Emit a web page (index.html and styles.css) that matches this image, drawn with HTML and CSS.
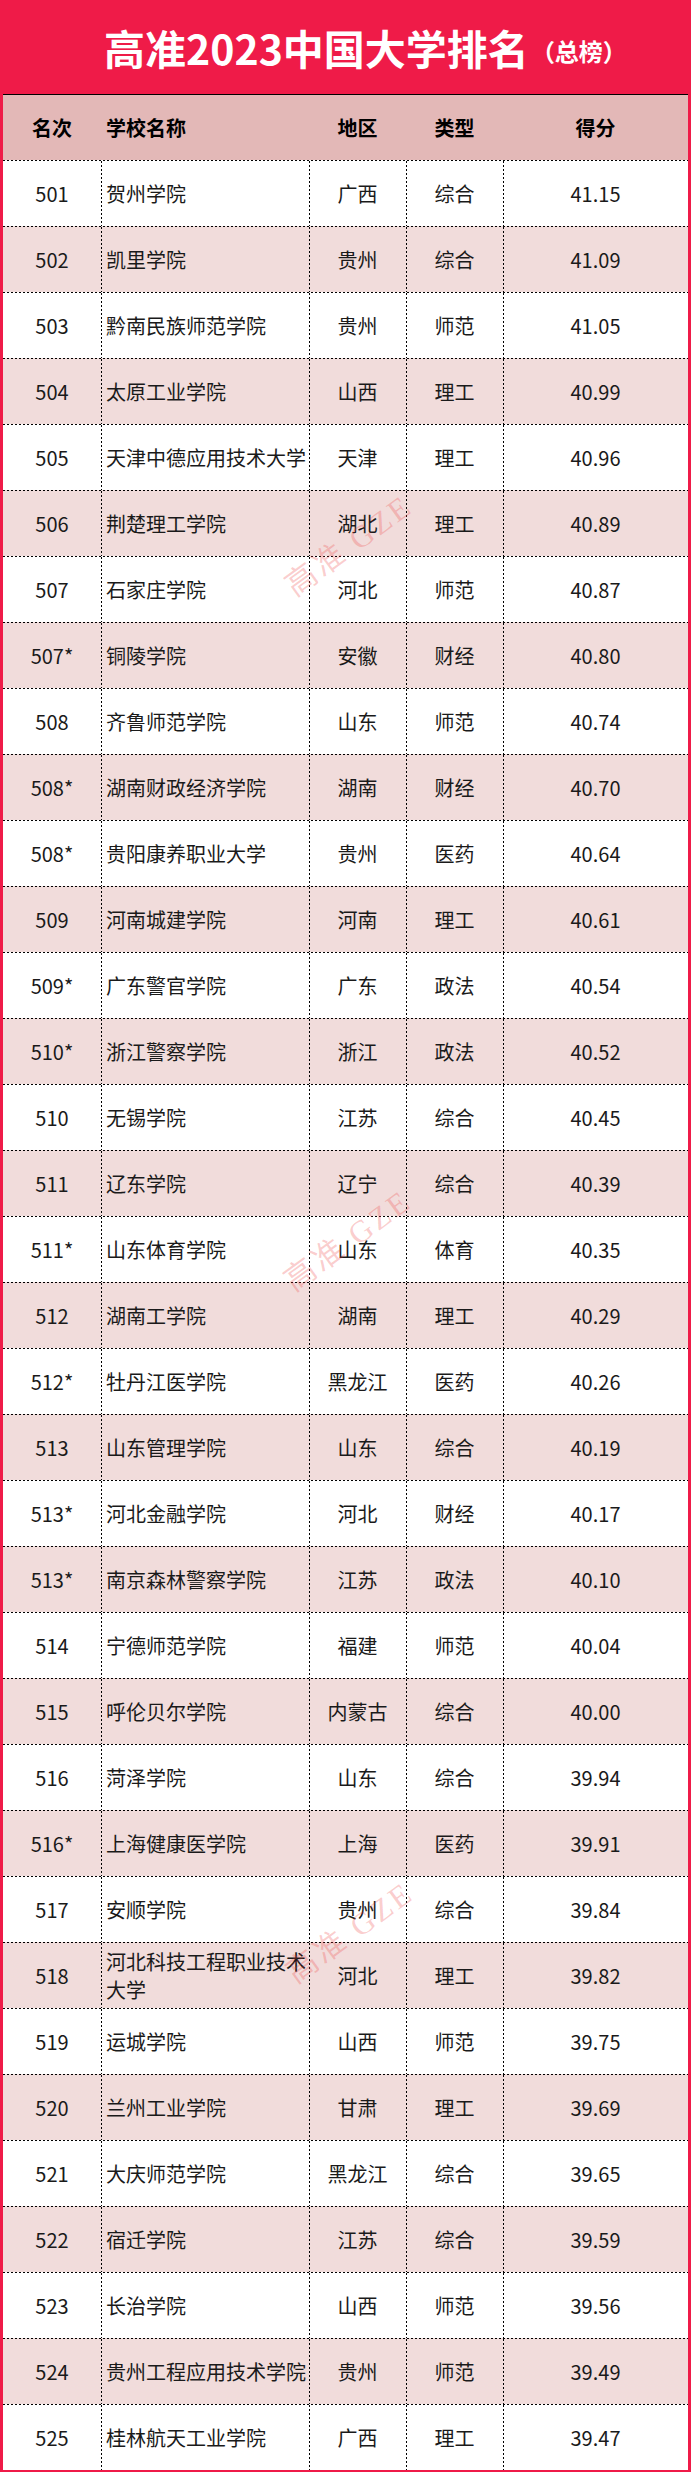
FILE: index.html
```html
<!DOCTYPE html>
<html lang="zh-CN">
<head>
<meta charset="utf-8">
<title>高准2023中国大学排名（总榜）</title>
<link rel="stylesheet" href="styles.css">
</head>
<body>
<div class="sheet">
  <div class="title"><span class="title-main">高准2023中国大学排名</span><span class="title-sub">（总榜）</span></div>
  <div class="head">
    <div class="cell c-rank">名次</div>
    <div class="cell c-name">学校名称</div>
    <div class="cell c-mid">地区</div>
    <div class="cell c-mid">类型</div>
    <div class="cell c-mid">得分</div>
  </div>
  <div class="row"><div class="cell c-rank">501</div><div class="cell c-name">贺州学院</div><div class="cell c-mid">广西</div><div class="cell c-mid">综合</div><div class="cell c-mid">41.15</div></div>
  <div class="row alt"><div class="cell c-rank">502</div><div class="cell c-name">凯里学院</div><div class="cell c-mid">贵州</div><div class="cell c-mid">综合</div><div class="cell c-mid">41.09</div></div>
  <div class="row"><div class="cell c-rank">503</div><div class="cell c-name">黔南民族师范学院</div><div class="cell c-mid">贵州</div><div class="cell c-mid">师范</div><div class="cell c-mid">41.05</div></div>
  <div class="row alt"><div class="cell c-rank">504</div><div class="cell c-name">太原工业学院</div><div class="cell c-mid">山西</div><div class="cell c-mid">理工</div><div class="cell c-mid">40.99</div></div>
  <div class="row"><div class="cell c-rank">505</div><div class="cell c-name">天津中德应用技术大学</div><div class="cell c-mid">天津</div><div class="cell c-mid">理工</div><div class="cell c-mid">40.96</div></div>
  <div class="row alt"><div class="cell c-rank">506</div><div class="cell c-name">荆楚理工学院</div><div class="cell c-mid">湖北</div><div class="cell c-mid">理工</div><div class="cell c-mid">40.89</div></div>
  <div class="row"><div class="cell c-rank">507</div><div class="cell c-name">石家庄学院</div><div class="cell c-mid">河北</div><div class="cell c-mid">师范</div><div class="cell c-mid">40.87</div></div>
  <div class="row alt"><div class="cell c-rank">507*</div><div class="cell c-name">铜陵学院</div><div class="cell c-mid">安徽</div><div class="cell c-mid">财经</div><div class="cell c-mid">40.80</div></div>
  <div class="row"><div class="cell c-rank">508</div><div class="cell c-name">齐鲁师范学院</div><div class="cell c-mid">山东</div><div class="cell c-mid">师范</div><div class="cell c-mid">40.74</div></div>
  <div class="row alt"><div class="cell c-rank">508*</div><div class="cell c-name">湖南财政经济学院</div><div class="cell c-mid">湖南</div><div class="cell c-mid">财经</div><div class="cell c-mid">40.70</div></div>
  <div class="row"><div class="cell c-rank">508*</div><div class="cell c-name">贵阳康养职业大学</div><div class="cell c-mid">贵州</div><div class="cell c-mid">医药</div><div class="cell c-mid">40.64</div></div>
  <div class="row alt"><div class="cell c-rank">509</div><div class="cell c-name">河南城建学院</div><div class="cell c-mid">河南</div><div class="cell c-mid">理工</div><div class="cell c-mid">40.61</div></div>
  <div class="row"><div class="cell c-rank">509*</div><div class="cell c-name">广东警官学院</div><div class="cell c-mid">广东</div><div class="cell c-mid">政法</div><div class="cell c-mid">40.54</div></div>
  <div class="row alt"><div class="cell c-rank">510*</div><div class="cell c-name">浙江警察学院</div><div class="cell c-mid">浙江</div><div class="cell c-mid">政法</div><div class="cell c-mid">40.52</div></div>
  <div class="row"><div class="cell c-rank">510</div><div class="cell c-name">无锡学院</div><div class="cell c-mid">江苏</div><div class="cell c-mid">综合</div><div class="cell c-mid">40.45</div></div>
  <div class="row alt"><div class="cell c-rank">511</div><div class="cell c-name">辽东学院</div><div class="cell c-mid">辽宁</div><div class="cell c-mid">综合</div><div class="cell c-mid">40.39</div></div>
  <div class="row"><div class="cell c-rank">511*</div><div class="cell c-name">山东体育学院</div><div class="cell c-mid">山东</div><div class="cell c-mid">体育</div><div class="cell c-mid">40.35</div></div>
  <div class="row alt"><div class="cell c-rank">512</div><div class="cell c-name">湖南工学院</div><div class="cell c-mid">湖南</div><div class="cell c-mid">理工</div><div class="cell c-mid">40.29</div></div>
  <div class="row"><div class="cell c-rank">512*</div><div class="cell c-name">牡丹江医学院</div><div class="cell c-mid">黑龙江</div><div class="cell c-mid">医药</div><div class="cell c-mid">40.26</div></div>
  <div class="row alt"><div class="cell c-rank">513</div><div class="cell c-name">山东管理学院</div><div class="cell c-mid">山东</div><div class="cell c-mid">综合</div><div class="cell c-mid">40.19</div></div>
  <div class="row"><div class="cell c-rank">513*</div><div class="cell c-name">河北金融学院</div><div class="cell c-mid">河北</div><div class="cell c-mid">财经</div><div class="cell c-mid">40.17</div></div>
  <div class="row alt"><div class="cell c-rank">513*</div><div class="cell c-name">南京森林警察学院</div><div class="cell c-mid">江苏</div><div class="cell c-mid">政法</div><div class="cell c-mid">40.10</div></div>
  <div class="row"><div class="cell c-rank">514</div><div class="cell c-name">宁德师范学院</div><div class="cell c-mid">福建</div><div class="cell c-mid">师范</div><div class="cell c-mid">40.04</div></div>
  <div class="row alt"><div class="cell c-rank">515</div><div class="cell c-name">呼伦贝尔学院</div><div class="cell c-mid">内蒙古</div><div class="cell c-mid">综合</div><div class="cell c-mid">40.00</div></div>
  <div class="row"><div class="cell c-rank">516</div><div class="cell c-name">菏泽学院</div><div class="cell c-mid">山东</div><div class="cell c-mid">综合</div><div class="cell c-mid">39.94</div></div>
  <div class="row alt"><div class="cell c-rank">516*</div><div class="cell c-name">上海健康医学院</div><div class="cell c-mid">上海</div><div class="cell c-mid">医药</div><div class="cell c-mid">39.91</div></div>
  <div class="row"><div class="cell c-rank">517</div><div class="cell c-name">安顺学院</div><div class="cell c-mid">贵州</div><div class="cell c-mid">综合</div><div class="cell c-mid">39.84</div></div>
  <div class="row alt"><div class="cell c-rank">518</div><div class="cell c-name">河北科技工程职业技术大学</div><div class="cell c-mid">河北</div><div class="cell c-mid">理工</div><div class="cell c-mid">39.82</div></div>
  <div class="row"><div class="cell c-rank">519</div><div class="cell c-name">运城学院</div><div class="cell c-mid">山西</div><div class="cell c-mid">师范</div><div class="cell c-mid">39.75</div></div>
  <div class="row alt"><div class="cell c-rank">520</div><div class="cell c-name">兰州工业学院</div><div class="cell c-mid">甘肃</div><div class="cell c-mid">理工</div><div class="cell c-mid">39.69</div></div>
  <div class="row"><div class="cell c-rank">521</div><div class="cell c-name">大庆师范学院</div><div class="cell c-mid">黑龙江</div><div class="cell c-mid">综合</div><div class="cell c-mid">39.65</div></div>
  <div class="row alt"><div class="cell c-rank">522</div><div class="cell c-name">宿迁学院</div><div class="cell c-mid">江苏</div><div class="cell c-mid">综合</div><div class="cell c-mid">39.59</div></div>
  <div class="row"><div class="cell c-rank">523</div><div class="cell c-name">长治学院</div><div class="cell c-mid">山西</div><div class="cell c-mid">师范</div><div class="cell c-mid">39.56</div></div>
  <div class="row alt"><div class="cell c-rank">524</div><div class="cell c-name">贵州工程应用技术学院</div><div class="cell c-mid">贵州</div><div class="cell c-mid">师范</div><div class="cell c-mid">39.49</div></div>
  <div class="row"><div class="cell c-rank">525</div><div class="cell c-name">桂林航天工业学院</div><div class="cell c-mid">广西</div><div class="cell c-mid">理工</div><div class="cell c-mid">39.47</div></div>

  <div class="wm wm1">高准 GZE</div>
  <div class="wm wm2">高准 GZE</div>
  <div class="wm wm3">高准 GZE</div>
</div>
</body>
</html>
```
FILE: styles.css
```css
html, body {
  margin: 0;
  padding: 0;
  background: #ffffff;
}

body {
  font-family: "Noto Sans CJK SC", "Noto Sans", sans-serif;
  color: #1a1a1a;
}

.sheet {
  position: relative;
  width: 691px;
  box-sizing: border-box;
  border-left: 3px solid #ef1b48;
  border-right: 3px solid #ef1b48;
  border-bottom: 3px solid #ef1b48;
  overflow: hidden;
}

.title {
  height: 94px;
  background: #ef1b48;
  margin: 0 -3px;
  display: flex;
  align-items: center;
  justify-content: center;
  padding-left: 40px;
  color: #ffffff;
  font-weight: 700;
}

.title-main {
  font-size: 41px;
  line-height: 1;
}

.title-sub {
  font-size: 24px;
  line-height: 1;
  margin-left: 2px;
  margin-top: 8px;
}

.head,
.row {
  display: grid;
  grid-template-columns: 98px 208px 97px 97px 1fr;
  height: 66px;
  box-sizing: border-box;
  font-size: 20px;
}

.head {
  border-top: 1px solid #000000;
  background: #e3b8b7;
  font-weight: 700;
  color: #000000;
}

.row {
  padding-top: 1px;
  background-color: #ffffff;
  background-image: repeating-linear-gradient(to right, #000 0 2px, transparent 2px 4px);
  background-size: 100% 1px;
  background-repeat: no-repeat;
  background-position: left top;
}

.row.alt {
  background-color: #f1dcdb;
}

.cell {
  display: flex;
  align-items: center;
  min-width: 0;
  line-height: 28px;
}

.row .cell + .cell {
  background-image: repeating-linear-gradient(to bottom, #000 0 2px, transparent 2px 4px);
  background-size: 1px 100%;
  background-repeat: no-repeat;
  background-position: left top;
}

.c-rank {
  justify-content: center;
}

.c-name {
  padding-left: 5px;
  padding-right: 2px;
}

.c-mid {
  justify-content: center;
}

.wm {
  position: absolute;
  font-family: "Liberation Serif", "Noto Sans CJK SC", serif;
  font-size: 31px;
  letter-spacing: 3px;
  white-space: nowrap;
  color: rgba(238, 60, 60, 0.26);
  transform: translate(-50%, -50%) rotate(-36deg);
  pointer-events: none;
}

.wm1 { left: 344px; top: 543px; }
.wm2 { left: 343px; top: 1238px; }
.wm3 { left: 345px; top: 1930px; }
```
